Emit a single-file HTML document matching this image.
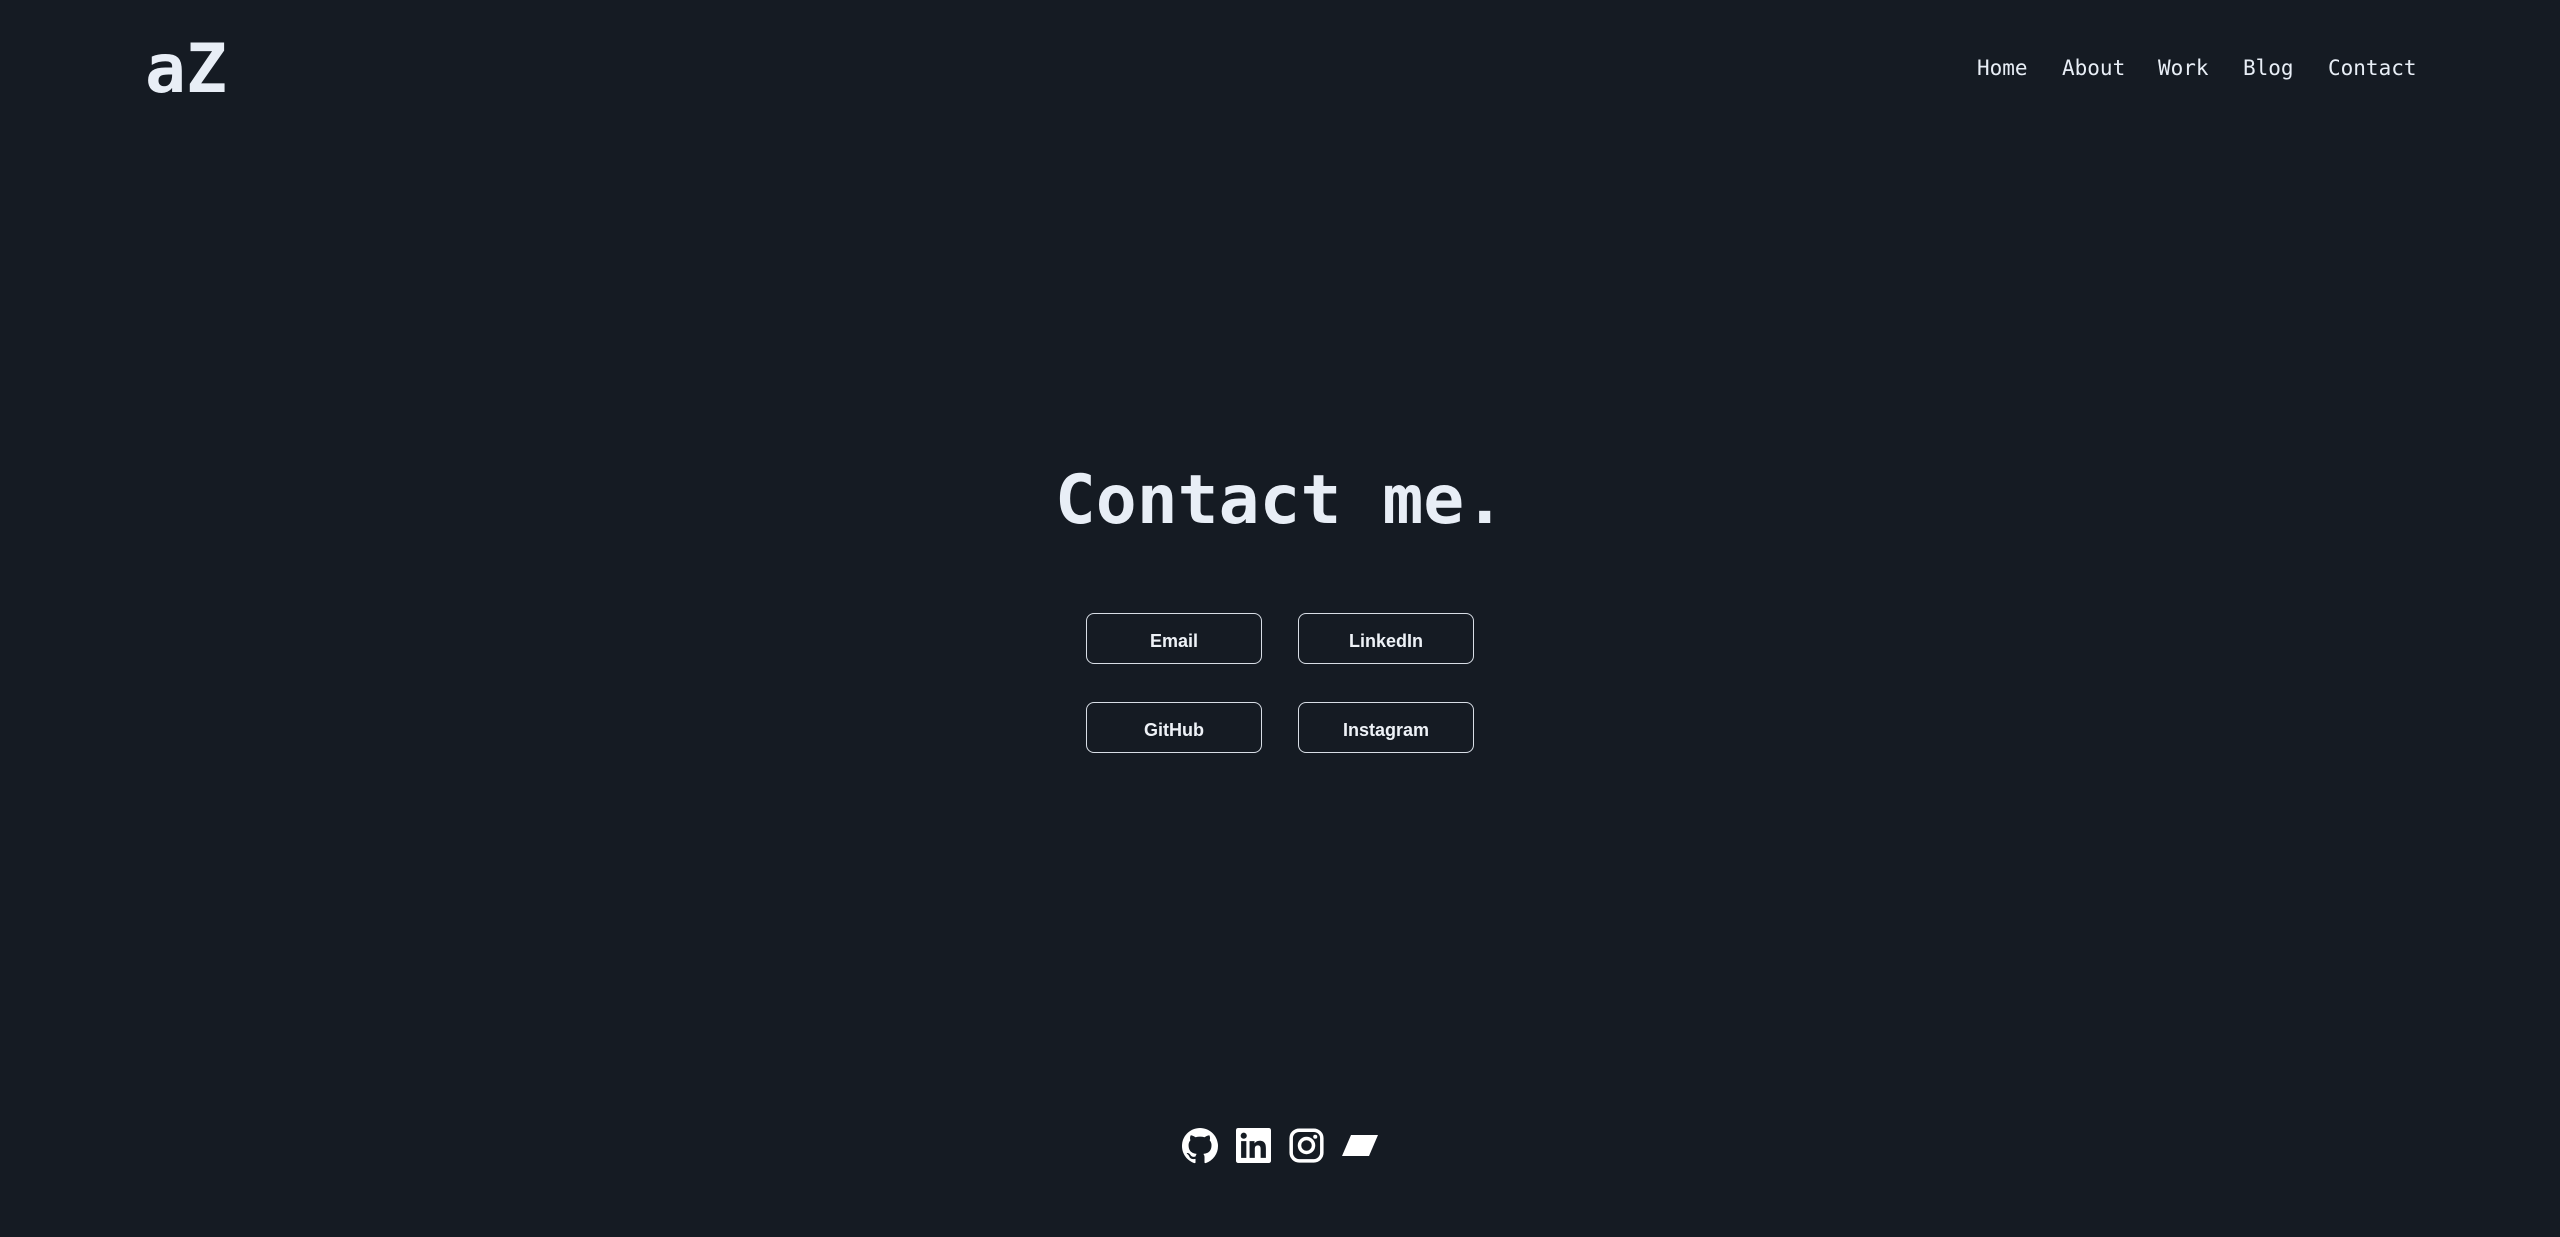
<!DOCTYPE html>
<html><head><meta charset="utf-8"><style>
html,body{margin:0;padding:0;width:2560px;height:1237px;background:#151b23;overflow:hidden;color:#e8eef6}
.mono{font-family:"DejaVu Sans Mono","Liberation Mono",monospace;font-weight:bold}
.abs{position:absolute;white-space:nowrap}
.logo{left:145px;top:25px;font-size:68px;line-height:90px}
.nav{top:54px;font-size:21px;line-height:28px;font-weight:normal}
h1{position:absolute;left:0;width:2560px;text-align:center;top:456px;margin:0;font-size:68px;line-height:90px}
.btn{position:absolute;width:174px;height:46px;padding-top:3px;border:1px solid #d8dee6;border-radius:8px;box-sizing:content-box;font-family:"Liberation Sans",Arial,sans-serif;font-weight:bold;font-size:18px;line-height:49px;text-align:center;color:#eef2f7}
svg{position:absolute}
</style></head><body>
<div class="abs mono logo">aZ</div>
<div class="abs mono nav" style="left:1977px">Home</div>
<div class="abs mono nav" style="left:2062px">About</div>
<div class="abs mono nav" style="left:2158px">Work</div>
<div class="abs mono nav" style="left:2243px">Blog</div>
<div class="abs mono nav" style="left:2328px">Contact</div>
<h1 class="mono">Contact me.</h1>
<div class="btn" style="left:1086px;top:613px">Email</div>
<div class="btn" style="left:1298px;top:613px">LinkedIn</div>
<div class="btn" style="left:1086px;top:702px">GitHub</div>
<div class="btn" style="left:1298px;top:702px">Instagram</div>
<svg style="left:1182px;top:1128px" width="36" height="36" viewBox="0 0 16 16"><path fill="#fff" d="M8 0C3.58 0 0 3.58 0 8c0 3.540 2.290 6.530 5.470 7.590.4.07.55-.17.55-.38 0-.19-.01-.82-.01-1.490-2.010.37-2.530-.49-2.690-.94-.09-.23-.48-.94-.82-1.130-.28-.15-.68-.52-.01-.53.63-.01 1.080.58 1.230.82.72 1.210 1.870.87 2.330.66.07-.52.28-.87.51-1.070-1.780-.2-3.640-.89-3.640-3.950 0-.87.31-1.590.82-2.150-.08-.2-.36-1.020.08-2.120 0 0 .67-.21 2.200.82.64-.18 1.320-.27 2-.27.68 0 1.360.09 2 .27 1.530-1.040 2.200-.82 2.200-.82.44 1.100.16 1.920.08 2.120.51.56.82 1.270.82 2.150 0 3.070-1.870 3.750-3.650 3.950.29.25.54.73.54 1.480 0 1.070-.01 1.930-.01 2.200 0 .21.15.46.55.38A8.013 8.013 0 0016 8c0-4.420-3.580-8-8-8z"/></svg>
<svg style="left:1236px;top:1128px" width="35" height="35" viewBox="0 0 24 24"><rect width="24" height="24" rx="1.5" fill="#fff"/><rect x="3.5" y="9" width="3.6" height="11.5" fill="#151b23"/><circle cx="5.3" cy="5.3" r="2.1" fill="#151b23"/><path fill="#151b23" d="M9.3 9h3.4v1.6c.5-.9 1.7-1.900 3.5-1.900 3.6 0 4.3 2.4 4.3 5.5v6.3h-3.6v-5.6c0-1.3 0-3-1.900-3s-2.100 1.4-2.100 2.900v5.700H9.3z"/></svg>
<svg style="left:1289px;top:1128px" width="35" height="35" viewBox="0 0 24 24"><rect x="1.5" y="1.5" width="21" height="21" rx="5.5" fill="none" stroke="#fff" stroke-width="2.4"/><circle cx="12" cy="12" r="4.8" fill="none" stroke="#fff" stroke-width="2.4"/><circle cx="18" cy="6" r="1.4" fill="#fff"/></svg>
<svg style="left:1342px;top:1135px" width="36" height="21" viewBox="0 0 36 21"><path fill="#fff" d="M9 0H36L27 21H0z"/></svg>
</body></html>
